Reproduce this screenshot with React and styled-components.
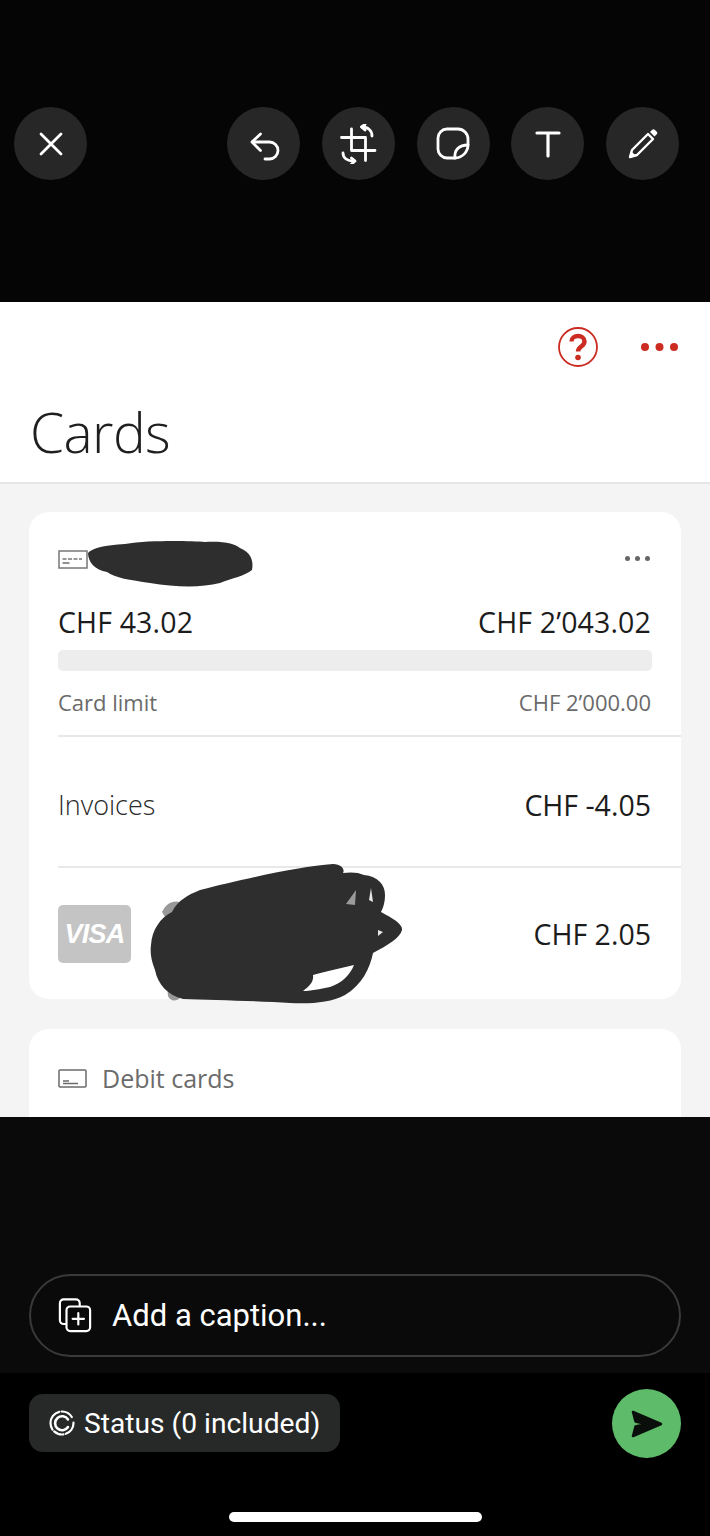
import React from "react";
import styled, { createGlobalStyle } from "styled-components";

const Global = createGlobalStyle`
  html, body { margin: 0; padding: 0; background: #000; }
  * { box-sizing: border-box; }
`;
const Page = styled.div`
  width: 710px; height: 1536px; display: flex; flex-direction: column; overflow: hidden; position: relative;
  background: #000; font-family: "Open Sans", "Liberation Sans", sans-serif;
`;
const TopBar = styled.div`
  height: 302px; background: #050505; padding: 107px 31px 0 14px; display: flex; gap: 21.75px; align-items: flex-start;
`;
const ToolButton = styled.button`
  width: 73px; height: 73px; border-radius: 50%; border: 0; padding: 0; background: #272727; color: #fff;
  display: flex; align-items: center; justify-content: center; flex: none;
  margin-left: ${p => p.$push ? "auto" : "0"};
`;
const Shot = styled.div`
  height: 815px; background: #f4f4f4; overflow: hidden; position: relative;
`;
const Header = styled.header`
  height: 182px; background: #fff; border-bottom: 2px solid #e6e6e6; padding: 0 32px 0 30px; display: flex; flex-direction: column;
`;
const HeaderActions = styled.div`
  height: 91px; padding-top: 25px; display: flex; justify-content: flex-end; gap: 43px; align-items: flex-start; color: #cc2b22;
`;
const DotSlot = styled.span`
  display: block; margin-top: ${p => p.$top}px; line-height: 0;
`;
const Title = styled.h1`
  margin: 0; font-size: 55px; line-height: 78px; font-weight: 300; color: #1f1f1f; letter-spacing: -0.6px;
`;
const Card = styled.section`
  margin: ${p => p.$top}px 29px 0; background: #fff; border-radius: 20px; position: relative;
  padding-left: 29px; height: ${p => p.$h}px;
`;
const CardHead = styled.div`
  height: 92px; padding: 38px 31px 0 0; display: flex; justify-content: space-between; align-items: flex-start; color: #666;
`;
const AmountRow = styled.div`
  display: flex; justify-content: space-between; padding-right: 30px; font-size: 28.5px; line-height: 36px; color: #1c1c1c; letter-spacing: 0.15px;
`;
const Bar = styled.div`
  height: 21px; margin: 10px 29px 0 0; background: #ededed; border-radius: 5px;
`;
const LimitRow = styled.div`
  display: flex; justify-content: space-between; padding-right: 30px; margin-top: 16px; height: 48px; font-size: 22px; line-height: 30px; color: #6a6a6a;
`;
const Row = styled.div`
  border-top: 2px solid #e8e8e8; display: flex; justify-content: space-between; align-items: center; padding: ${p => p.$pt || 0}px 30px 0 0;
  height: ${p => p.$h}px; font-size: 28.5px; color: #1c1c1c;
`;
const RowLabel = styled.span`
  font-weight: 300; font-size: 27px; color: #2a2a2a;
`;
const VisaBadge = styled.div`
  width: 73px; height: 58px; border-radius: 5px; background: #c4c4c4; color: #fff; display: flex; align-items: center; justify-content: center;
  padding-top: 2px; font: italic 700 27px "Liberation Sans", sans-serif; letter-spacing: -0.8px;
`;
const Scribble = styled.svg`
  position: absolute; left: 0; top: 0; pointer-events: none; overflow: visible;
`;
const DebitHead = styled.div`
  display: flex; align-items: center; gap: 15px; padding-top: 33px; font-size: 25px; line-height: 32px; color: #6b6b6b;
`;
const CaptionArea = styled.div`
  height: 256px; background: #0a0a0a; padding: 157px 29px 0;
`;
const CaptionBox = styled.div`
  height: 83px; border: 2px solid #3a3a3a; border-radius: 42px; display: flex; align-items: center; gap: 20px; padding-left: 27px;
  color: #fff; font: 400 31px Roboto, "Liberation Sans", sans-serif;
`;
const Footer = styled.div`
  flex: 1; background: #000; padding: 16px 29px 0; display: flex; justify-content: space-between; align-items: flex-start;
`;
const StatusChip = styled.div`
  margin-top: 5px; width: 311px; height: 58px; border-radius: 14px; background: #272929; color: #fff; display: flex; align-items: center; gap: 9px; padding-left: 20px;
  font: 400 28.2px Roboto, "Liberation Sans", sans-serif;
`;
const SendButton = styled.button`
  width: 69px; height: 69px; border-radius: 50%; border: 0; padding: 0; background: #5dbb6a; display: flex; align-items: center; justify-content: center;
`;
const HomeBar = styled.div`
  position: absolute; left: 229px; top: 1512px; width: 253px; height: 10px; border-radius: 5px; background: #fff;
`;

const Icon = ({ size = 34, sw = 2.8, children }) => (
  <svg width={size} height={size} viewBox={`0 0 ${size} ${size}`} fill="none" stroke="currentColor" strokeWidth={sw} strokeLinecap="round" strokeLinejoin="round">{children}</svg>
);

const Dots = ({ w, r, color }) => (
  <svg width={w} height={r * 2} viewBox={`0 0 ${w} ${r * 2}`} fill={color}>
    <circle cx={r} cy={r} r={r} /><circle cx={w / 2} cy={r} r={r} /><circle cx={w - r} cy={r} r={r} />
  </svg>
);

export default function App() {
  return (
    <Page>
      <Global />
      <TopBar>
        <ToolButton aria-label="close"><Icon><path d="M7 7l20 20M27 7L7 27" /></Icon></ToolButton>
        <ToolButton $push aria-label="undo"><Icon><path d="M13.500 7L5 15l8.500 8.500" /><path d="M5.500 15h17a8.500 8.500 0 0 1 0 17H18" /></Icon></ToolButton>
        <ToolButton aria-label="crop">
          <Icon size={40}>
            <path d="M13.500 5v21.500H37" /><path d="M3.500 13.500h24v23" />
            <path d="M24 3c6 0 10 3.500 10 9" /><path d="M27 .5L23.500 3 27 6" />
            <path d="M5 29c0 5 4 8 11 8" /><path d="M13.500 34l3.500 3-3.500 3" />
          </Icon>
        </ToolButton>
        <ToolButton aria-label="sticker">
          <Icon size={34}>
            <path d="M11 2h11a10 10 0 0 1 10 10v6c0 7-6 13-13 13H11a9 9 0 0 1-9-9V11a9 9 0 0 1 9-9z" />
            <path d="M19 31c-1-8 4-13 13-13" />
          </Icon>
        </ToolButton>
        <ToolButton aria-label="text"><Icon size={28} sw={3.2}><path d="M3 3h22M14 3v23" /></Icon></ToolButton>
        <ToolButton aria-label="pencil">
          <svg width="30" height="31" viewBox="0 0 30 31" fill="none" stroke="currentColor" strokeWidth="2.400" strokeLinejoin="round">
            <path d="M2 29l2-7L20 6l5 5L9 27z" />
            <path fill="currentColor" stroke="none" d="M22 4l2-2a2 2 0 0 1 3 0l1.500 1.500a2 2 0 0 1 0 3L26.500 8.500z" />
            <path fill="currentColor" stroke="none" d="M1 30l2-7 5 5z" />
          </svg>
        </ToolButton>
      </TopBar>
      <Shot>
        <Header>
          <HeaderActions>
            <svg width="40" height="40" viewBox="0 0 40 40">
              <circle cx="20" cy="20" r="19" fill="none" stroke="currentColor" strokeWidth="1.800" />
              <path d="M13.500 14.500c0-3.500 3-5.500 6.500-5.500s6.500 2 6.500 5.500c0 5-6.500 5-6.500 10" fill="none" stroke="currentColor" strokeWidth="4.400" />
              <circle cx="20" cy="30.500" r="2.800" fill="currentColor" />
            </svg>
            <DotSlot $top={16}><Dots w={37} r={4} color="#cc2b22" /></DotSlot>
          </HeaderActions>
          <Title>Cards</Title>
        </Header>
        <Card $top={28} $h={487}>
          <CardHead>
            <svg width="30" height="20" viewBox="0 0 30 20" fill="none" stroke="#777">
              <rect x="1" y="1" width="28" height="17" strokeWidth="1.500" />
              <path d="M4.500 9h4M10 9h4M15.500 9h4M21 9h3" strokeWidth="1.600" />
              <path d="M4.500 13h7" strokeWidth="1.600" />
            </svg>
            <DotSlot $top={4.5}><Dots w={25} r={2.5} color="#666" /></DotSlot>
          </CardHead>
          <AmountRow><span>CHF 43.02</span><span>CHF 2’043.02</span></AmountRow>
          <Bar />
          <LimitRow><span>Card limit</span><span>CHF 2’000.00</span></LimitRow>
          <Row $h={131} $pt={6}><RowLabel>Invoices</RowLabel><span>CHF -4.05</span></Row>
          <Row $h={132} $pt={1}>
            <VisaBadge>VISA</VisaBadge>
            <span>CHF 2.05</span>
          </Row>
          <Scribble width="652" height="487" viewBox="29 512 652 487">
            <path fill="#2e2e2e" d="M88 553C92 548 105 545 125 544C150 540 190 541 205 542C225 541 235 544 240 548C250 552 254 560 252 570C245 576 232 578 220 583C200 588 175 587 150 583C130 580 115 578 107 572C95 570 88 562 88 553Z" />
            <path fill="#999" d="M162 912C166 904 172 900 180 902L190 912L170 925ZM167 985L182 988L180 998C176 1002 170 1001 168 996Z" />
            <path fill="#2e2e2e" d="M151 945C152 930 160 918 172 912C178 900 188 895 200 890C240 880 300 866 333 864C342 864 345 870 343 873C350 872 358 872 364 875C378 876 385 885 385 895C385 903 383 908 381 912C392 918 403 924 402 930C400 938 388 945 373 953C370 968 362 985 345 995C330 1003 310 1004 290 1003C260 1001 210 1000 183 999C168 995 158 985 155 970C151 960 150 952 151 945Z" />
            <path fill="#fff" d="M313 975C325 972 340 968 354 965C350 975 342 983 330 987C320 989 310 991 303 991C310 986 314 981 313 975Z" />
            <path fill="#9a9a9a" d="M346 904L356 890L355 905Z" />
            <path fill="#e8e8e8" d="M371 888L373 902L369 900ZM378 930L383 932L378 936Z" />
          </Scribble>
        </Card>
        <Card $top={30} $h={200}>
          <DebitHead>
            <svg width="29" height="19" viewBox="0 0 29 19" fill="none" stroke="#6b6b6b" strokeWidth="1.500">
              <rect x="1" y="1" width="27" height="17" rx="1" />
              <path d="M5 12h6M5 14.500h15" />
            </svg>
            Debit cards
          </DebitHead>
        </Card>
      </Shot>
      <CaptionArea>
        <CaptionBox>
          <svg width="34" height="35" viewBox="0 0 36 36" fill="none" stroke="#fff" strokeWidth="2.300" strokeLinecap="round" strokeLinejoin="round">
            <path d="M8 27H6a4 4 0 0 1-4-4V5a4 4 0 0 1 4-4h13a4 4 0 0 1 4 4v3" />
            <rect x="9" y="8.500" width="25" height="26" rx="4" />
            <path d="M21.500 15.500v12M15.500 21.500h12" />
          </svg>
          Add a caption...
        </CaptionBox>
      </CaptionArea>
      <Footer>
        <StatusChip>
          <svg width="26" height="26" viewBox="0 0 26 26" fill="none" stroke="#fff" strokeLinecap="round" style={{ flex: "none" }}>
            <circle cx="13" cy="13" r="11.500" strokeWidth="2.200" strokeDasharray="14 2.500 10 2.500 22 2.500 12 6" />
            <path d="M19 9.500A7 7 0 1 0 19 17" strokeWidth="2.600" />
          </svg>
          Status (0 included)
        </StatusChip>
        <SendButton aria-label="send">
          <svg width="32" height="28" viewBox="0 0 32 28"><path fill="#0b0f0b" d="M2 2L30 14 2 26l2.500-9.500L15 14 4.500 11.500z" stroke="#0b0f0b" strokeWidth="2.500" strokeLinejoin="round" /></svg>
        </SendButton>
      </Footer>
      <HomeBar />
    </Page>
  );
}
